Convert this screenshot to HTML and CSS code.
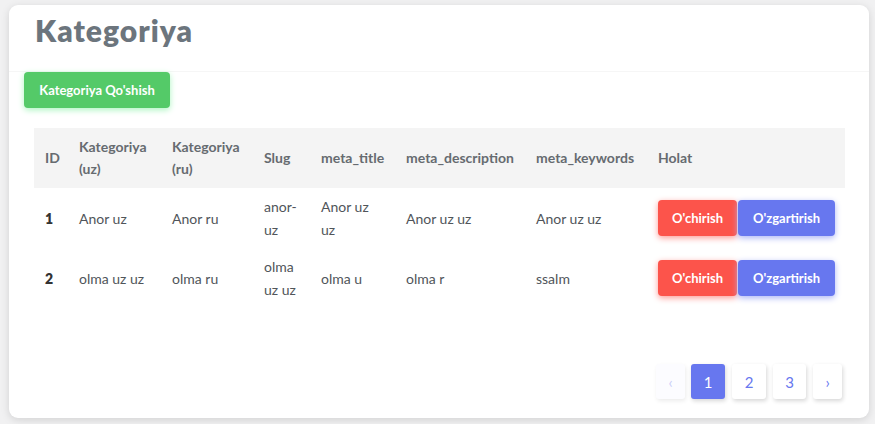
FILE: index.html
```html
<!DOCTYPE html>
<html lang="uz">
<head>
<meta charset="utf-8">
<title>Kategoriya</title>
<link rel="stylesheet" href="styles.css">
</head>
<body>
<div class="card">
  <div class="card-header">
    <h1 class="title">Kategoriya</h1>
  </div>
  <div class="card-body">
    <button class="btn btn-success btn-add">Kategoriya Qo'shish</button>
    <table class="table">
      <colgroup>
        <col class="c-id">
        <col class="c-uz">
        <col class="c-ru">
        <col class="c-slug">
        <col class="c-title">
        <col class="c-desc">
        <col class="c-kw">
        <col class="c-act">
      </colgroup>
      <thead>
        <tr>
          <th>ID</th>
          <th>Kategoriya (uz)</th>
          <th>Kategoriya (ru)</th>
          <th>Slug</th>
          <th class="nowrap">meta_title</th>
          <th class="nowrap">meta_description</th>
          <th class="nowrap">meta_keywords</th>
          <th>Holat</th>
        </tr>
      </thead>
      <tbody>
        <tr>
          <td class="id">1</td>
          <td>Anor uz</td>
          <td>Anor ru</td>
          <td>anor-uz</td>
          <td>Anor uz uz</td>
          <td>Anor uz uz</td>
          <td>Anor uz uz</td>
          <td class="actions"><button class="btn btn-danger">O'chirish</button><button class="btn btn-primary">O'zgartirish</button></td>
        </tr>
        <tr>
          <td class="id">2</td>
          <td>olma uz uz</td>
          <td>olma ru</td>
          <td>olma uz uz</td>
          <td>olma u</td>
          <td>olma r</td>
          <td>ssalm</td>
          <td class="actions"><button class="btn btn-danger">O'chirish</button><button class="btn btn-primary">O'zgartirish</button></td>
        </tr>
      </tbody>
    </table>
    <nav class="pager">
      <ul class="pagination">
        <li class="page prev disabled">‹</li>
        <li class="page active">1</li>
        <li class="page">2</li>
        <li class="page p3">3</li>
        <li class="page next">›</li>
      </ul>
    </nav>
  </div>
</div>
</body>
</html>
```
FILE: styles.css
```css
* { box-sizing: border-box; }
html, body { margin: 0; padding: 0; }
body {
  background: #f1f1f2;
  font-family: "Lato", "Noto Sans", sans-serif;
  color: #555b63;
  width: 875px;
  height: 424px;
  overflow: hidden;
}
.card {
  margin: 5px 0 0 9px;
  width: 860px;
  height: 413px;
  background: #fff;
  border-radius: 9px;
  box-shadow: 0 2px 8px rgba(0, 0, 0, 0.13);
  display: flex;
  flex-direction: column;
}
.card-header {
  height: 67px;
  padding: 7px 26px 0;
  border-bottom: 1px solid #f6f6f6;
}
.title {
  margin: 0;
  font-size: 30px;
  line-height: 36px;
  font-weight: 800;
  letter-spacing: 1px;
  color: #6c757d;
}
.card-body {
  padding: 0 24px 0 15px;
  display: flex;
  flex-direction: column;
  align-items: flex-start;
}
.btn {
  border: 0;
  font-family: inherit;
  font-weight: 700;
  font-size: 13px;
  color: #fff;
  height: 36px;
  border-radius: 4px;
  padding: 0;
  cursor: pointer;
}
.btn-add {
  width: 146px;
  background: #54ca68;
  box-shadow: 0 2px 6px #acf5c0;
}
.table {
  margin: 20px 0 0 10px;
  width: 811px;
  table-layout: fixed;
  border-collapse: collapse;
  font-size: 14px;
}
.c-id { width: 34px; }
.c-uz { width: 93px; }
.c-ru { width: 92px; }
.c-slug { width: 57px; }
.c-title { width: 85px; }
.c-desc { width: 130px; }
.c-kw { width: 122px; }
.c-act { width: 198px; }
.table th {
  background: #f4f4f4;
  color: #666b70;
  font-weight: 700;
  text-align: left;
  height: 60px;
  padding: 8px 11px;
  line-height: 22px;
  vertical-align: middle;
}
.table td {
  height: 60px;
  padding: 0 11px;
  line-height: 23px;
  vertical-align: middle;
  color: #50555a;
}
.table td.id { font-weight: 800; color: #333; }
.nowrap { white-space: nowrap; }
.table td.actions { padding: 0 10px 0 11px; white-space: nowrap; }
.actions .btn { vertical-align: middle; }
.btn-danger {
  width: 79px;
  background: #fc544b;
  box-shadow: 0 2px 6px #fd9b96;
}
.btn-primary {
  width: 97px;
  margin-left: 1px;
  background: #6777ef;
  box-shadow: 0 2px 6px #acb5f6;
}
.pager {
  align-self: stretch;
  display: flex;
  justify-content: flex-end;
  margin-top: 56px;
  padding-right: 3px;
}
.pagination {
  list-style: none;
  margin: 0;
  padding: 0;
  display: flex;
  gap: 7px;
}
.page {
  height: 35px;
  width: 34px;
  display: flex;
  align-items: center;
  justify-content: center;
  background: #fff;
  color: #6777ef;
  font-size: 15px;
  border-radius: 3px;
  box-shadow: 1px 2px 4px rgba(0, 0, 0, 0.16);
}
.page.prev { width: 29px; margin-right: -1px; }
.page.next { width: 29px; }
.page.p3 { width: 33px; }
.page.active {
  background: #6777ef;
  color: #fff;
}
.page.disabled {
  background: #fcfcff;
  color: #c9cdf7;
  box-shadow: 1px 2px 4px rgba(0, 0, 0, 0.08);
}
```
